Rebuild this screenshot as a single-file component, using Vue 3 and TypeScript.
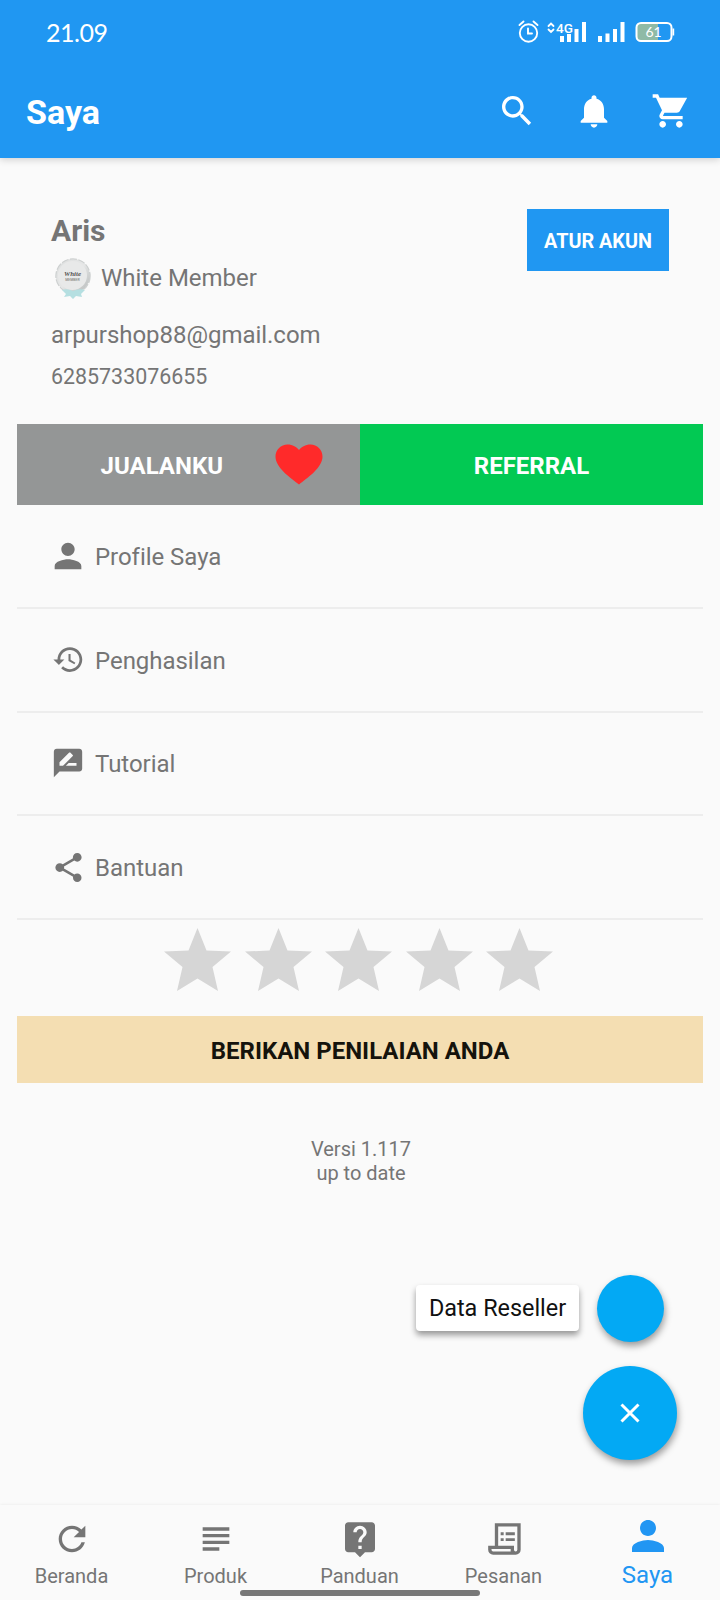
<script setup lang="ts">
interface MenuItem {
  label: string
  icon: string
  size: number
}

interface NavItem {
  label: string
  icon: string
  active?: boolean
}

const PERSON = 'M12 12c2.21 0 4-1.79 4-4s-1.79-4-4-4-4 1.79-4 4 1.79 4 4 4zm0 2c-2.67 0-8 1.34-8 4v2h16v-2c0-2.66-5.33-4-8-4z'

const actions: string[] = [
  'M15.5 14h-.79l-.28-.27C15.41 12.59 16 11.11 16 9.5 16 5.91 13.09 3 9.5 3S3 5.91 3 9.5 5.91 16 9.5 16c1.61 0 3.09-.59 4.23-1.57l.27.28v.79l5 4.99L20.49 19l-4.99-5zm-6 0C7.01 14 5 11.99 5 9.5S7.01 5 9.5 5 14 7.01 14 9.5 11.99 14 9.5 14z',
  'M12 22c1.1 0 2-.9 2-2h-4c0 1.1.89 2 2 2zm6-6v-5c0-3.07-1.64-5.64-4.5-6.32V4c0-.83-.67-1.5-1.5-1.5s-1.5.67-1.5 1.5v.68C7.63 5.36 6 7.92 6 11v5l-2 2v1h16v-1l-2-2z',
  'M7 18c-1.1 0-1.99.9-1.99 2S5.9 22 7 22s2-.9 2-2-.9-2-2-2zM1 2v2h2l3.6 7.59-1.35 2.45c-.16.28-.25.61-.25.96 0 1.1.9 2 2 2h12v-2H7.42c-.14 0-.25-.11-.25-.25l.03-.12.9-1.63h7.45c.75 0 1.41-.41 1.75-1.03L21.700 4H5.21l-.94-2H1zm16 16c-1.1 0-1.99.9-1.99 2s.89 2 1.99 2 2-.9 2-2-.9-2-2-2z',
]

const menu: MenuItem[] = [
  { label: 'Profile Saya', icon: PERSON, size: 40 },
  {
    label: 'Penghasilan',
    icon: 'M13 3c-4.97 0-9 4.03-9 9H1l3.89 3.89.07.14L9 12H6c0-3.87 3.13-7 7-7s7 3.13 7 7-3.13 7-7 7c-1.93 0-3.68-.79-4.94-2.06l-1.42 1.42C8.27 19.99 10.51 21 13 21c4.97 0 9-4.03 9-9s-4.03-9-9-9zm-1 5v5l4.28 2.54.72-1.21-3.5-2.08V8H12z',
    size: 33,
  },
  {
    label: 'Tutorial',
    icon: 'M20 2H4c-1.1 0-1.99.9-1.99 2L2 22l4-4h14c1.1 0 2-.9 2-2V4c0-1.1-.9-2-2-2zM6 14v-2.47l6.88-6.88c.2-.2.51-.2.71 0l1.77 1.77c.2.2.2.51 0 .71L8.47 14H6zm12 0h-7.5l2-2H18v2z',
    size: 34,
  },
  {
    label: 'Bantuan',
    icon: 'M18 16.08c-.76 0-1.44.3-1.96.77L8.91 12.7c.05-.23.09-.46.09-.7s-.04-.47-.09-.7l7.05-4.11c.54.5 1.25.81 2.04.81 1.66 0 3-1.34 3-3s-1.34-3-3-3-3 1.34-3 3c0 .24.04.47.09.7L8.04 9.81C7.5 9.31 6.79 9 6 9c-1.66 0-3 1.34-3 3s1.34 3 3 3c.79 0 1.5-.31 2.04-.81l7.12 4.16c-.05.21-.08.43-.08.65 0 1.61 1.31 2.92 2.92 2.92s2.92-1.31 2.92-2.92-1.31-2.92-2.92-2.92z',
    size: 35,
  },
]

const nav: NavItem[] = [
  {
    label: 'Beranda',
    icon: 'M17.65 6.35C16.2 4.9 14.21 4 12 4c-4.42 0-7.99 3.58-7.99 8s3.57 8 7.99 8c3.73 0 6.84-2.55 7.73-6h-2.08c-.82 2.33-3.04 4-5.65 4-3.31 0-6-2.69-6-6s2.69-6 6-6c1.66 0 3.14.69 4.22 1.78L13 11h7V4l-2.35 2.35z',
  },
  { label: 'Produk', icon: 'M4 5h16v2H4zM4 9h16v2H4zM4 13h16v2H4zM4 17h10v2H4z' },
  {
    label: 'Panduan',
    icon: 'M19 2H5c-1.11 0-2 .9-2 2v14c0 1.1.89 2 2 2h4l3 3 3-3h4c1.1 0 2-.9 2-2V4c0-1.1-.9-2-2-2zm-6 16h-2v-2h2v2zm2.07-7.75l-.9.92C13.45 11.9 13 12.5 13 14h-2v-.5c0-1.1.45-2.1 1.17-2.83l1.24-1.26c.37-.36.59-.86.59-1.41 0-1.1-.9-2-2-2s-2 .9-2 2H8c0-2.21 1.79-4 4-4s4 1.79 4 4c0 .88-.36 1.68-.93 2.25z',
  },
  {
    label: 'Pesanan',
    icon: 'M6.5 2.5V16H2.5v2.5A3 3 0 0 0 5.5 21.5H19a3 3 0 0 0 3-3V2.5zM16 19.5H5.500a1 1 0 0 1-1-1V18H16zM20 18.500a1 1 0 0 1-2 0V16H8.500V4.500H20zM10 8h1.800v1.700H10zM13 8h5.500v1.700H13zM10 11.500h1.800v1.700H10zM13 11.500h5.500v1.700H13z',
  },
  { label: 'Saya', icon: PERSON, active: true },
]
</script>

<template>
  <div class="screen">
    <header class="top">
      <div class="status">
        <span class="clock">21.09</span>
        <svg class="status-icons" width="170" height="32" viewBox="0 0 170 32">
          <g fill="none" stroke="#fff" stroke-width="1.9" stroke-linecap="round">
            <circle cx="18.500" cy="17" r="8.700" />
            <path d="M18 12.500v5h4M9.500 9l4-3.500M27.500 9l-4-3.500" />
            <path d="M38.500 10l2.500-2.500 2.500 2.500M38.500 13.500l2.500 2.500 2.500-2.500" stroke-width="1.800" />
          </g>
          <text class="net" x="46" y="17">4G</text>
          <path fill="#fff" d="M50 20h4v6h-4zM57 18h4v8h-4zM64.500 13h4v13h-4zM72 6h4v20h-4zM88 20h4v6h-4zM95.500 17.500h4v8.500h-4zM103 13h4v13h-4zM110.500 6h4v20h-4z" />
          <path fill="#8fbaa6" d="M129 7.500h19v17h-19a2.500 2.500 0 0 1-2.500-2.500V10a2.500 2.500 0 0 1 2.500-2.500z" />
          <rect x="126.500" y="7" width="35" height="18" rx="4.500" fill="none" stroke="#fff" stroke-width="2" />
          <path fill="#fff" d="M162.500 12.500h1.700v7h-1.700z" />
          <text class="level" x="135.500" y="21">61</text>
        </svg>
      </div>
      <div class="bar">
        <h1 class="title">Saya</h1>
        <div class="actions">
          <svg v-for="(icon, i) in actions" :key="i" width="40" height="40" viewBox="0 0 24 24"><path :d="icon" /></svg>
        </div>
      </div>
    </header>

    <section class="profile">
      <div class="identity">
        <div class="name">Aris</div>
        <div class="member">
          <svg class="badge" width="40" height="44" viewBox="0 0 40 44">
            <defs>
              <linearGradient id="seal" x1="0" y1="0" x2="1" y2="1">
                <stop offset="0" stop-color="#dcdede" />
                <stop offset=".5" stop-color="#e6e7e7" />
                <stop offset="1" stop-color="#b4b8b8" />
              </linearGradient>
            </defs>
            <circle cx="20" cy="20" r="17" fill="#dcdede" stroke="#cdd0d0" stroke-width="1.500" stroke-dasharray="7 1.500" />
            <circle cx="20" cy="20" r="16.500" fill="url(#seal)" />
            <circle cx="19.500" cy="19.500" r="14.500" fill="#e8e9e9" />
            <path d="M9 34q5-2 11 1 6-3 12-1l-4 4 1 3-6-1-3 3-3-3-6 1 2-3z" fill="#b5dfe1" />
            <text x="19.500" y="20" class="seal-name">White</text>
            <text x="19.500" y="24.500" class="seal-sub">MEMBER</text>
          </svg>
          <span>White Member</span>
        </div>
        <div class="email">arpurshop88@gmail.com</div>
        <div class="phone">6285733076655</div>
      </div>
      <button class="account">ATUR AKUN</button>
    </section>

    <main class="content">
      <div class="tabs">
        <button class="tab sales">
          <span>JUALANKU</span>
          <svg class="heart" width="48" height="41" viewBox="0 0 48 41">
            <path fill="#ff2a2a" d="M24 40.500C16 34 .5 24 .5 12.500.5 5.500 6 .5 12.500.5c5 0 9.500 2.500 11.500 5.500C26 3 30.500.5 35.500.5 42 .5 47.500 5.500 47.500 12.500 47.500 24 32 34 24 40.500z" />
          </svg>
        </button>
        <button class="tab referral">REFERRAL</button>
      </div>

      <ul class="menu">
        <li v-for="item in menu" :key="item.label">
          <span class="icon-box">
            <svg :width="item.size" :height="item.size" viewBox="0 0 24 24"><path :d="item.icon" /></svg>
          </span>
          <span class="menu-label">{{ item.label }}</span>
        </li>
      </ul>

      <div class="stars">
        <svg v-for="n in 5" :key="n" width="67" height="63" viewBox="0 0 67 63">
          <path fill="#d6d6d6" d="M33.500 0L42.500 22.500 67 23.500 48.500 39 54 63 33.500 50.500 13 63 18.500 39 0 23.500 24.500 22.500z" />
        </svg>
      </div>

      <button class="rate">BERIKAN PENILAIAN ANDA</button>
      <p class="version">Versi 1.117<br />up to date</p>
    </main>

    <div class="fab-group">
      <div class="fab-row">
        <span class="fab-label">Data Reseller</span>
        <button class="fab small"></button>
      </div>
      <button class="fab large">
        <svg width="22" height="22" viewBox="0 0 22 22"><path d="M2.500 2.500l17 17M19.500 2.500l-17 17" stroke="#fff" stroke-width="3" /></svg>
      </button>
    </div>

    <nav class="bottom">
      <a v-for="item in nav" :key="item.label" class="nav-item" :class="{ active: item.active }">
        <svg class="nav-icon" viewBox="0 0 24 24"><path fill-rule="evenodd" :d="item.icon" /></svg>
        <span>{{ item.label }}</span>
      </a>
      <div class="home-bar"></div>
    </nav>
  </div>
</template>

<style>
body {
  margin: 0;
  background: #fafafa;
}
</style>

<style scoped>
.screen {
  position: relative;
  width: 720px;
  height: 1600px;
  overflow: hidden;
  display: flex;
  flex-direction: column;
  box-sizing: border-box;
  background: #fafafa;
  color: #757575;
  font-family: Roboto, "Liberation Sans", sans-serif;
  font-size: 24px;
}

button {
  border: 0;
  padding: 0;
  font: inherit;
  font-weight: 700;
  color: #fff;
}

svg {
  display: block;
  flex: none;
  fill: currentColor;
}

.top {
  flex: none;
  height: 158px;
  background: #2097f2;
  color: #fff;
  box-shadow: 0 2px 7px rgba(0, 0, 0, 0.16);
}

.status {
  height: 64px;
  display: flex;
  justify-content: space-between;
  align-items: center;
  padding: 0 44px 0 46px;
}

.clock {
  font-family: Lato, sans-serif;
  font-size: 25px;
  letter-spacing: -0.5px;
}

.status-icons {
  margin-right: -4px;
}

.net {
  font: 500 13.5px Roboto, sans-serif;
}

.level {
  font: 400 14px Lato, sans-serif;
}

.bar {
  height: 94px;
  display: flex;
  align-items: center;
  justify-content: space-between;
  padding: 0 29px 0 26px;
}

.title {
  margin: 2px 0 0;
  font-size: 34px;
  line-height: 40px;
}

.actions {
  display: flex;
  gap: 37px;
}

.profile {
  flex: none;
  height: 266px;
  box-sizing: border-box;
  padding: 51px 51px 0;
  display: flex;
  justify-content: space-between;
  align-items: flex-start;
}

.name {
  margin-top: 4px;
  font-size: 30px;
  font-weight: 700;
  line-height: 36px;
}

.member {
  display: flex;
  align-items: center;
  gap: 8px;
  height: 44px;
  margin-top: 7px;
}

.email {
  margin-top: 20px;
  line-height: 30px;
  letter-spacing: -0.03px;
}

.phone {
  margin-top: 13px;
  font-size: 21.4px;
  line-height: 28px;
}

.badge {
  margin-left: 2px;
}

.seal-name {
  font: italic 700 7px "Liberation Serif", serif;
  fill: #555;
  text-anchor: middle;
}

.seal-sub {
  font: 500 3.5px Roboto, sans-serif;
  fill: #888;
  text-anchor: middle;
}

.account {
  width: 142px;
  height: 62px;
  padding-top: 2px;
  background: #2097f2;
  font-size: 19.8px;
}

.content {
  padding: 0 17px;
}

.tabs {
  display: grid;
  grid-template-columns: 1fr 1fr;
  height: 81px;
}

.tab {
  padding-top: 2px;
}

.sales {
  display: flex;
  align-items: center;
  justify-content: flex-end;
  gap: 52px;
  padding-right: 37px;
  background: #949696;
}

.heart {
  margin-top: -2px;
}

.referral {
  background: #02c953;
}

.menu {
  list-style: none;
  margin: 0;
  padding: 0;
}

.menu li {
  height: 103.75px;
  box-sizing: border-box;
  display: flex;
  align-items: center;
  padding-left: 31px;
  border-bottom: 2px solid #ededed;
}

.menu-label {
  padding-top: 2px;
  letter-spacing: -0.04px;
}

.icon-box {
  width: 40px;
  height: 40px;
  display: flex;
  align-items: center;
  justify-content: center;
  margin-right: 7px;
}

.stars {
  display: flex;
  gap: 13.6px;
  padding: 8px 0 0 147px;
}

.rate {
  display: block;
  width: 100%;
  height: 67px;
  margin-top: 25px;
  padding-top: 2px;
  background: #f4deb2;
  color: #15130c;
}

.version {
  margin: 54px 0 0 2px;
  text-align: center;
  font-size: 20px;
  line-height: 24px;
}

.fab-group {
  position: absolute;
  right: 43px;
  top: 1275px;
  display: flex;
  flex-direction: column;
  align-items: flex-end;
  gap: 24px;
}

.fab-row {
  display: flex;
  align-items: center;
  gap: 18px;
  margin-right: 13px;
}

.fab-label {
  width: 163px;
  height: 46px;
  margin-top: -1px;
  line-height: 47px;
  text-align: center;
  font-size: 23.4px;
  border-radius: 4px;
  background: #fff;
  color: #111;
  box-shadow: 0 4px 6px rgba(0, 0, 0, 0.4);
}

.fab {
  display: flex;
  align-items: center;
  justify-content: center;
  border-radius: 50%;
  background: #03a9f4;
  box-shadow: 1px 4px 7px rgba(0, 0, 0, 0.38);
}

.small {
  width: 67px;
  height: 67px;
}

.large {
  width: 94px;
  height: 94px;
}

.bottom {
  position: absolute;
  left: 0;
  right: 0;
  bottom: 0;
  height: 95px;
  display: grid;
  grid-template-columns: repeat(5, 1fr);
  background: #fafafa;
  box-shadow: 0 0 3px rgba(0, 0, 0, 0.08);
}

.nav-item {
  display: flex;
  flex-direction: column;
  align-items: center;
  padding-top: 14px;
  font-size: 20px;
  line-height: 24px;
}

.nav-icon {
  width: 40px;
  height: 40px;
  margin-bottom: 5px;
}

.nav-item span {
  margin-right: 1px;
}

.active {
  padding-top: 7px;
  color: #2196f3;
  font-size: 24px;
  line-height: 28px;
}

.active .nav-icon {
  width: 48px;
  height: 48px;
  margin-bottom: 1px;
}

.home-bar {
  position: absolute;
  left: 240px;
  bottom: 4px;
  width: 240px;
  height: 6px;
  border-radius: 3px;
  background: #777;
}
</style>
